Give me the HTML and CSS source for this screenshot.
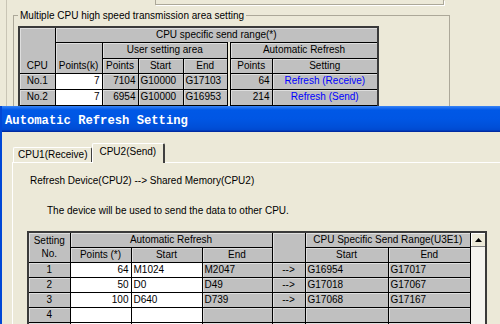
FILE: index.html
```html
<!DOCTYPE html>
<html lang="en">
<head>
    <meta charset="UTF-8">
    <meta name="viewport" content="width=device-width, initial-scale=1.0">
    <title>Automatic Refresh Setting</title>
    <link rel="stylesheet" href="styles.css">
</head>
<body>
<div class="screen">
    <!-- parameter window behind the dialog -->
    <div class="back-window">
        <div class="top-box"></div>
        <fieldset class="group">
            <legend>Multiple CPU high speed transmission area setting</legend>
            <div class="grid-wrap">
                <table class="grid cpu-table">
                    <colgroup>
                        <col class="w35"><col class="w47"><col class="w36"><col class="w45"><col class="w46"><col class="w43"><col class="w105">
                    </colgroup>
                    <tr class="h14">
                        <th rowspan="3" class="bottom">CPU</th>
                        <th colspan="6">CPU specific send range(*)</th>
                    </tr>
                    <tr class="h16">
                        <th rowspan="2" class="bottom">Points(k)</th>
                        <th colspan="3">User setting area</th>
                        <th colspan="2" class="dbl">Automatic Refresh</th>
                    </tr>
                    <tr class="h15">
                        <th>Points</th>
                        <th>Start</th>
                        <th>End</th>
                        <th class="dbl">Points</th>
                        <th>Setting</th>
                    </tr>
                    <tr class="h16">
                        <th>No.1</th>
                        <td class="edit num">7</td>
                        <td class="num">7104</td>
                        <td>G10000</td>
                        <td>G17103</td>
                        <td class="num dbl">64</td>
                        <td class="link">Refresh (Receive)</td>
                    </tr>
                    <tr class="h16">
                        <th>No.2</th>
                        <td class="edit num">7</td>
                        <td class="num">6954</td>
                        <td>G10000</td>
                        <td>G16953</td>
                        <td class="num dbl">214</td>
                        <td class="link">Refresh (Send)</td>
                    </tr>
                    <tr class="h16">
                        <th></th>
                        <td class="edit"></td>
                        <td></td>
                        <td></td>
                        <td></td>
                        <td class="dbl"></td>
                        <td></td>
                    </tr>
                </table>
            </div>
        </fieldset>
    </div>

    <!-- dialog -->
    <div class="dialog">
        <div class="titlebar">Automatic Refresh Setting</div>
        <div class="tabs">
            <div class="tab">CPU1(Receive)</div>
            <div class="tab active">CPU2(Send)</div>
        </div>
        <div class="tab-panel">
            <p class="line-1">Refresh Device(CPU2) --&gt; Shared Memory(CPU2)</p>
            <p class="line-2">The device will be used to send the data to other CPU.</p>
            <div class="grid-wrap">
                <table class="grid refresh-table">
                    <colgroup>
                        <col class="w41"><col class="w61"><col class="w71"><col class="w70"><col class="w33"><col class="w83"><col class="w82">
                    </colgroup>
                    <tr class="h14">
                        <th rowspan="2" class="two-line">Setting<br>No.</th>
                        <th colspan="3">Automatic Refresh</th>
                        <th rowspan="2"></th>
                        <th colspan="2">CPU Specific Send Range(U3E1)</th>
                    </tr>
                    <tr class="h15">
                        <th>Points (*)</th>
                        <th>Start</th>
                        <th>End</th>
                        <th>Start</th>
                        <th>End</th>
                    </tr>
                    <tr class="h15">
                        <th>1</th>
                        <td class="edit num">64</td>
                        <td class="edit">M1024</td>
                        <td>M2047</td>
                        <td class="arrow">--&gt;</td>
                        <td>G16954</td>
                        <td>G17017</td>
                    </tr>
                    <tr class="h15">
                        <th>2</th>
                        <td class="edit num">50</td>
                        <td class="edit">D0</td>
                        <td>D49</td>
                        <td class="arrow">--&gt;</td>
                        <td>G17018</td>
                        <td>G17067</td>
                    </tr>
                    <tr class="h15">
                        <th>3</th>
                        <td class="edit num">100</td>
                        <td class="edit">D640</td>
                        <td>D739</td>
                        <td class="arrow">--&gt;</td>
                        <td>G17068</td>
                        <td>G17167</td>
                    </tr>
                    <tr class="h15">
                        <th>4</th>
                        <td class="edit"></td>
                        <td class="edit"></td>
                        <td></td>
                        <td></td>
                        <td></td>
                        <td></td>
                    </tr>
                    <tr class="h15">
                        <th></th>
                        <td class="edit"></td>
                        <td class="edit"></td>
                        <td></td>
                        <td></td>
                        <td></td>
                        <td></td>
                    </tr>
                </table>
                <div class="scrollbar">
                    <div class="scroll-up">
                        <svg width="7" height="4" viewBox="0 0 7 4"><path d="M3.5 0 L7 4 L0 4 Z" fill="#000"/></svg>
                    </div>
                </div>
            </div>
        </div>
    </div>
</div>
</body>
</html>
```

FILE: styles.css
```css
body {
    margin: 0;
    font-family: "Liberation Sans", Arial, sans-serif;
    font-size: 10px;
    color: #000;
    background-color: #ece9d8;
}
.screen {
    position: relative;
    width: 500px;
    height: 324px;
    overflow: hidden;
}

/* window behind */
.back-window {
    margin-left: 6px;
    height: 324px;
    border-left: 1px solid #c9c5b5;
}
.top-box {
    margin-left: 148px;
    width: 287px;
    height: 4px;
    border: 1px solid #aca899;
    border-top: none;
    box-shadow: 1px 1px 0 #fff;
}
.group {
    box-sizing: border-box;
    width: 437px;
    margin: 4px 0 0 6px;
    padding: 4px 0 0 4px;
    border: 1px solid #aca899;
    height: 320px;
}
.group legend {
    padding: 0 2px;
    line-height: 13px;
}

/* grids */
.grid-wrap {
    display: flex;
    width: max-content;
    border: 2px solid #3a3a3a;
}
.grid {
    border-collapse: collapse;
    border-style: hidden;
    table-layout: fixed;
}
.grid th, .grid td {
    border: 1px solid #000;
    padding: 0 2px;
    background-color: #c0c0c0;
    box-shadow: inset 1px 1px 0 #dedede;
    font-weight: normal;
    text-align: left;
    white-space: nowrap;
    overflow: hidden;
    line-height: 12px;
}
.grid th {
    text-align: center;
}
.grid .bottom {
    vertical-align: bottom;
    padding-bottom: 1px;
}
.grid .num {
    text-align: right;
}
.grid .edit {
    background-color: #fff;
    box-shadow: none;
}
.grid .link {
    color: #0000ff;
    text-align: center;
}
.grid .dbl {
    border-left: 4px double #000;
}
.grid .arrow {
    text-align: center;
}
.grid .two-line {
    line-height: 13px;
}
.h14 { height: 14px; }
.h15 { height: 15px; }
.h16 { height: 16px; }

.w33 { width: 33px; }
.w35 { width: 35px; }
.w36 { width: 36px; }
.w41 { width: 41px; }
.w43 { width: 43px; }
.w45 { width: 45px; }
.w46 { width: 46px; }
.w47 { width: 47px; }
.w61 { width: 61px; }
.w70 { width: 70px; }
.w71 { width: 71px; }
.w82 { width: 82px; }
.w83 { width: 83px; }
.w105 { width: 105px; }

.cpu-table { width: 357px; }
.refresh-table { width: 441px; }

.scrollbar {
    width: 14px;
    border-left: 1px solid #000;
    background-color: #f5f4ef;
}
.scroll-up {
    height: 13px;
    display: flex;
    justify-content: center;
    align-items: center;
    background-color: #ece9d8;
    border-bottom: 1px solid #808080;
    box-shadow: inset 1px 1px 0 #fff;
}

/* dialog */
.dialog {
    position: absolute;
    left: 0;
    top: 106px;
    width: 498px;
    height: 218px;
    border-left: 2px solid #0047d6;
    background-color: #ece9d8;
}
.titlebar {
    height: 24px;
    padding: 2px 0 0 3px;
    line-height: 26px;
    font-family: "Liberation Mono", "Courier New", monospace;
    font-weight: bold;
    font-size: 12.2px;
    color: #fff;
    background: linear-gradient(to bottom, #3a86f5 0, #1a6cf0 2px, #0058e6 4px, #0056e4 13px, #004fd8 21px, #0049d0 24px, #0030a8 25px, #00259c 26px);
}
.tabs {
    display: flex;
    align-items: flex-end;
    padding: 11px 0 0 11px;
    position: relative;
    z-index: 1;
}
.tab {
    height: 14px;
    padding: 0 4px;
    line-height: 14px;
    border: 1px solid #fff;
    border-bottom: none;
    border-right-color: #404040;
    border-radius: 2px 2px 0 0;
}
.tab.active {
    height: 19px;
    margin-bottom: -1px;
    padding: 0 7px 0 6px;
    line-height: 15px;
    background-color: #ece9d8;
    border-right: 2px solid #404040;
}
.tab-panel {
    margin-left: 10px;
    height: 200px;
    padding: 11px 0 0 14px;
    border-top: 1px solid #fff;
    border-left: 1px solid #fff;
}
.tab-panel p {
    margin: 0;
    line-height: 13px;
}
.tab-panel .line-1 {
    margin-left: 3px;
}
.tab-panel .line-2 {
    margin: 17px 0 14px 20px;
}
```
